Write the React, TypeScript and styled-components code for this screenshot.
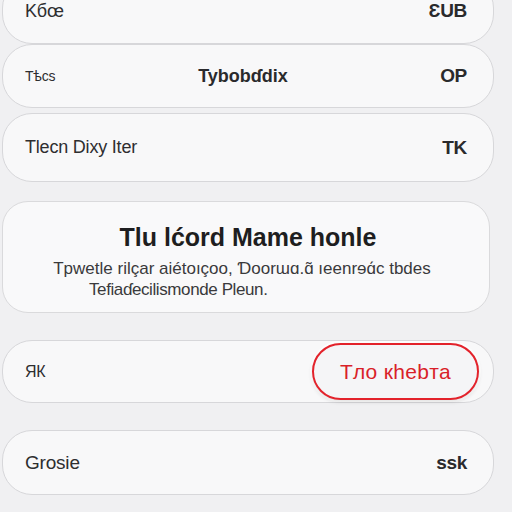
import React from "react";
import styled, { createGlobalStyle } from "styled-components";

const Global = createGlobalStyle`
  html, body { margin: 0; padding: 0; background: #f0f0f2; }
  body { font-family: "Liberation Sans", Arial, sans-serif; overflow: hidden; }
`;

const Page = styled.div`
  width: 512px;
  height: 512px;
  overflow: hidden;
  display: flex;
  flex-direction: column;
  padding: 0 18px 0 2px;
  box-sizing: border-box;
`;

const Card = styled.div<{ $h: number; $mt: number; $r?: number }>`
  flex: none;
  height: ${(p) => p.$h}px;
  margin-top: ${(p) => p.$mt}px;
  border: 1.5px solid #d7d7da;
  border-radius: ${(p) => p.$r ?? 30}px;
  background: #f8f8f9;
  box-sizing: border-box;
  display: flex;
  align-items: center;
  justify-content: space-between;
  padding: 0 26px 0 22px;
  position: relative;
`;

const Label = styled.span<{ $size?: number }>`
  font-size: ${(p) => p.$size ?? 15}px;
  color: #2e2e30;
  letter-spacing: -0.2px;
`;

const Value = styled.span`
  font-size: 19px;
  font-weight: 600;
  color: #2a2a2c;
  letter-spacing: -0.3px;
`;

const Center = styled.span`
  position: absolute;
  left: 0;
  right: 0;
  text-align: center;
  font-size: 18px;
  font-weight: 600;
  color: #2a2a2c;
  pointer-events: none;
  padding-right: 10px;
`;

const InfoCard = styled.div`
  flex: none;
  height: 112px;
  margin-top: 19px;
  margin-right: 4px;
  border: 1.5px solid #dadadc;
  border-radius: 26px;
  background: #f9f9fa;
  box-sizing: border-box;
  display: flex;
  flex-direction: column;
  align-items: center;
  padding-top: 21px;
`;

const Title = styled.div`
  font-size: 25px;
  font-weight: 600;
  color: #1e1e20;
  letter-spacing: 0px;
  margin-bottom: 6px;
  padding-left: 4px;
`;

const Desc = styled.div`
  font-size: 17px;
  color: #3a3a3c;
  line-height: 21px;
  text-align: center;
  letter-spacing: 0px;
  padding-right: 8px;
`;

const DescSecond = styled.div`
  font-size: 17px;
  color: #3a3a3c;
  line-height: 21px;
  letter-spacing: -0.4px;
  align-self: flex-start;
  padding-left: 86px;
`;

const PillButton = styled.button`
  height: 57px;
  width: 167px;
  margin-right: -12px;
  border: 2.5px solid #e3222b;
  border-radius: 30px;
  background: #f5f5f7;
  box-shadow: 0 2px 4px rgba(0, 0, 0, 0.12), 0 0 0 2px #ffffff;
  color: #d91f29;
  font-family: "Liberation Sans", Arial, sans-serif;
  font-size: 21px;
  font-weight: 500;
  letter-spacing: 0.3px;
  cursor: pointer;
`;

export default function App() {
  return (
    <>
      <Global />
      <Page>
        <Card $h={66} $mt={-22}>
          <Label $size={18}>Kбœ</Label>
          <Value>ƐUB</Value>
        </Card>
        <Card $h={64} $mt={0}>
          <Label $size={14}>Tѣcs</Label>
          <Center>Tybobɗdix</Center>
          <Value>OP</Value>
        </Card>
        <Card $h={69} $mt={5}>
          <Label $size={18}>Tlecn Dixy Iter</Label>
          <Value>TK</Value>
        </Card>
        <InfoCard>
          <Title>Tlu lćord Mame  honle</Title>
          <Desc>Tpwetle rilçar aiétoıçoo, Ɗoorɯɑ.ɑ̃ ıeenrɘɑ́c tbdes</Desc>
          <DescSecond>Tefiaɗecilismonde Pleun.</DescSecond>
        </InfoCard>
        <Card $h={63} $mt={27}>
          <Label $size={16}>ЯК</Label>
          <PillButton>Tлo кhebтa</PillButton>
        </Card>
        <Card $h={65} $mt={27}>
          <Label $size={19}>Grosie</Label>
          <Value>ssk</Value>
        </Card>
      </Page>
    </>
  );
}
